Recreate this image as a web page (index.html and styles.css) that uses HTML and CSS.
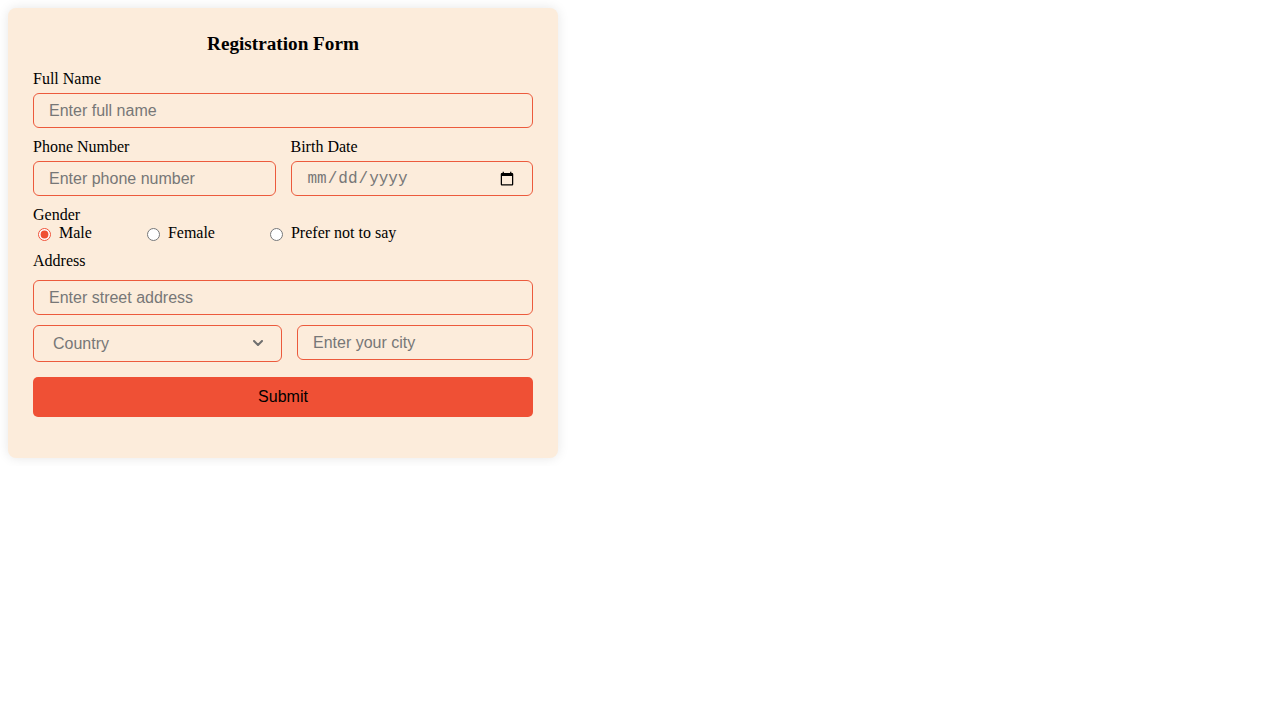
FILE: index.html
```html
<!DOCTYPE html>
<html>
<head>
<meta charset="utf-8">
<title>Registration Form</title>
<link rel="stylesheet" href="styles.css">
</head>
<body>
<form class="card">
  <h3 class="title">Registration Form</h3>
  <div class="field">
    <label class="lbl" for="fullname">Full Name</label>
    <input class="inp" id="fullname" type="text" placeholder="Enter full name">
  </div>
  <div class="row field">
    <div class="col">
      <label class="lbl" for="phone">Phone Number</label>
      <input class="inp" id="phone" type="text" placeholder="Enter phone number">
    </div>
    <div class="col">
      <label class="lbl" for="birth">Birth Date</label>
      <input class="inp date" id="birth" type="date">
    </div>
  </div>
  <div class="gender">
    <div class="lbl-plain">Gender</div>
    <div class="options">
      <input type="radio" id="g1" name="g" checked><label class="opt" for="g1">Male</label>
      <input type="radio" id="g2" name="g"><label class="opt" for="g2">Female</label>
      <input type="radio" id="g3" name="g"><label class="opt" for="g3">Prefer not to say</label>
    </div>
  </div>
  <div class="address">
    <label class="lbl addr-lbl" for="street">Address</label>
    <input class="inp" id="street" type="text" placeholder="Enter street address">
    <div class="row addr-row">
      <div class="sel-wrap">
        <select class="sel">
          <option>Country</option>
        </select>
        <svg class="chev" width="10" height="6" viewBox="0 0 10 6"><path d="M1 1 L5 5 L9 1" fill="none" stroke="#6f6f6f" stroke-width="2" stroke-linecap="round" stroke-linejoin="round"/></svg>
      </div>
      <input class="inp city" type="text" placeholder="Enter your city">
    </div>
  </div>
  <button class="submit" type="button">Submit</button>
</form>
</body>
</html>
```
FILE: styles.css
```css
html, body {
  margin: 0;
  padding: 0;
  background: #ffffff;
}
body {
  padding: 8px;
  font-family: "Liberation Serif", "Times New Roman", serif;
  font-size: 16px;
  color: #000;
}
.card {
  box-sizing: border-box;
  width: 550px;
  padding: 25px 25px 41px;
  background: #fcecdb;
  border-radius: 8px;
  box-shadow: 0 0 12px rgba(0, 0, 0, 0.1);
}
.title {
  margin: 0 0 14.5px;
  font-size: 19.2px;
  font-weight: bold;
  text-align: center;
}
.field {
  margin-bottom: 10px;
}
.lbl {
  display: block;
  margin-bottom: 5px;
}
.addr-lbl {
  margin-bottom: 10px;
}
.inp {
  display: block;
  box-sizing: border-box;
  width: 100%;
  height: 35px;
  margin: 0;
  padding: 2px 15px 0;
  border: 1px solid #ec5a3c;
  border-radius: 6px;
  background: transparent;
  font-family: "Liberation Sans", Arial, sans-serif;
  font-size: 16px;
  color: #000;
  outline: none;
}
.inp::placeholder {
  color: #777;
}
.date {
  font-family: "Liberation Mono", "Courier New", monospace;
  color: #777;
}
.row {
  display: flex;
  gap: 15px;
  align-items: flex-start;
}
.row .col {
  flex: 1;
  min-width: 0;
}
.gender {
  margin-bottom: 10px;
}
.options {
  display: flex;
  align-items: center;
}
.options input {
  margin: 3px 3px 0 5px;
  accent-color: #ef5035;
}
.opt {
  margin-left: 5px;
  margin-right: 50px;
}
.addr-row {
  margin-top: 10px;
}
.sel-wrap {
  position: relative;
  flex: none;
  width: 249px;
}
.sel {
  box-sizing: border-box;
  display: block;
  width: 100%;
  height: 37px;
  margin: 0;
  padding: 0 15px 0 19px;
  border: 1px solid #ec5a3c;
  border-radius: 6px;
  background: transparent;
  appearance: none;
  -webkit-appearance: none;
  font-family: "Liberation Sans", Arial, sans-serif;
  font-size: 16px;
  color: #777;
}
.chev {
  position: absolute;
  left: 220px;
  top: 15px;
  pointer-events: none;
}
.city {
  flex: 1;
  width: auto;
  min-width: 0;
}
.submit {
  display: block;
  width: 100%;
  height: 40px;
  margin-top: 15px;
  border: none;
  border-radius: 5px;
  background: #ef5035;
  font-family: "Liberation Sans", Arial, sans-serif;
  font-size: 16px;
  color: #000;
}
```
